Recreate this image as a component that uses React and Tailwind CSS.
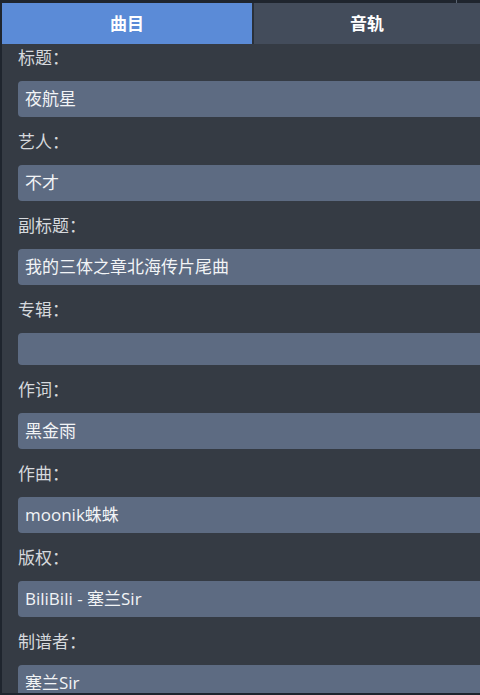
import React from "react";

const fields = [
  ["标题：", "夜航星"],
  ["艺人：", "不才"],
  ["副标题：", "我的三体之章北海传片尾曲"],
  ["专辑：", ""],
  ["作词：", "黑金雨"],
  ["作曲：", "moonik蛛蛛"],
  ["版权：", "BiliBili - 塞兰Sir"],
  ["制谱者：", "塞兰Sir"],
];

const font = { fontFamily: '"Segoe UI", "Open Sans", "Noto Sans CJK SC", sans-serif' };

export default function App() {
  return (
    <div
      className="w-[480px] h-[695px] overflow-hidden bg-[#1f252e] flex flex-col"
      style={font}
    >
      <div className="h-[3px] shrink-0 flex">
        <div className="ml-[456px] w-[1px] bg-[#5a6472]" />
      </div>
      <div className="flex-1 min-h-0 flex flex-col ml-[2px] mb-[2px] bg-[#353b44] overflow-hidden">
        <div className="h-[41px] shrink-0 flex">
          <div className="w-[250px] bg-[#5b8bd7] flex items-center justify-center text-white font-bold text-[17px]">
            曲目
          </div>
          <div className="w-[2px] bg-[#2a3039]" />
          <div className="flex-1 bg-[#434c5b] flex items-center justify-center text-white font-bold text-[17px]">
            音轨
          </div>
        </div>
        <div className="flex flex-col pl-[16px]">
          {fields.map(([label, value], i) => (
            <div key={label} className={i === 0 ? "mt-[2px]" : "mt-[13px]"}>
              <div className="h-[24px] leading-[24px] text-[17px] text-[#d6d9dd]">{label}</div>
              <div
                className={
                  "mt-[11px] w-[480px] rounded-l-[4px] bg-[#5d6b82] px-[7px] text-[17px] text-[#f2f4f6] " +
                  (value ? "h-[36px] leading-[36px]" : "h-[32px]")
                }
              >
                {value}
              </div>
            </div>
          ))}
        </div>
      </div>
    </div>
  );
}
